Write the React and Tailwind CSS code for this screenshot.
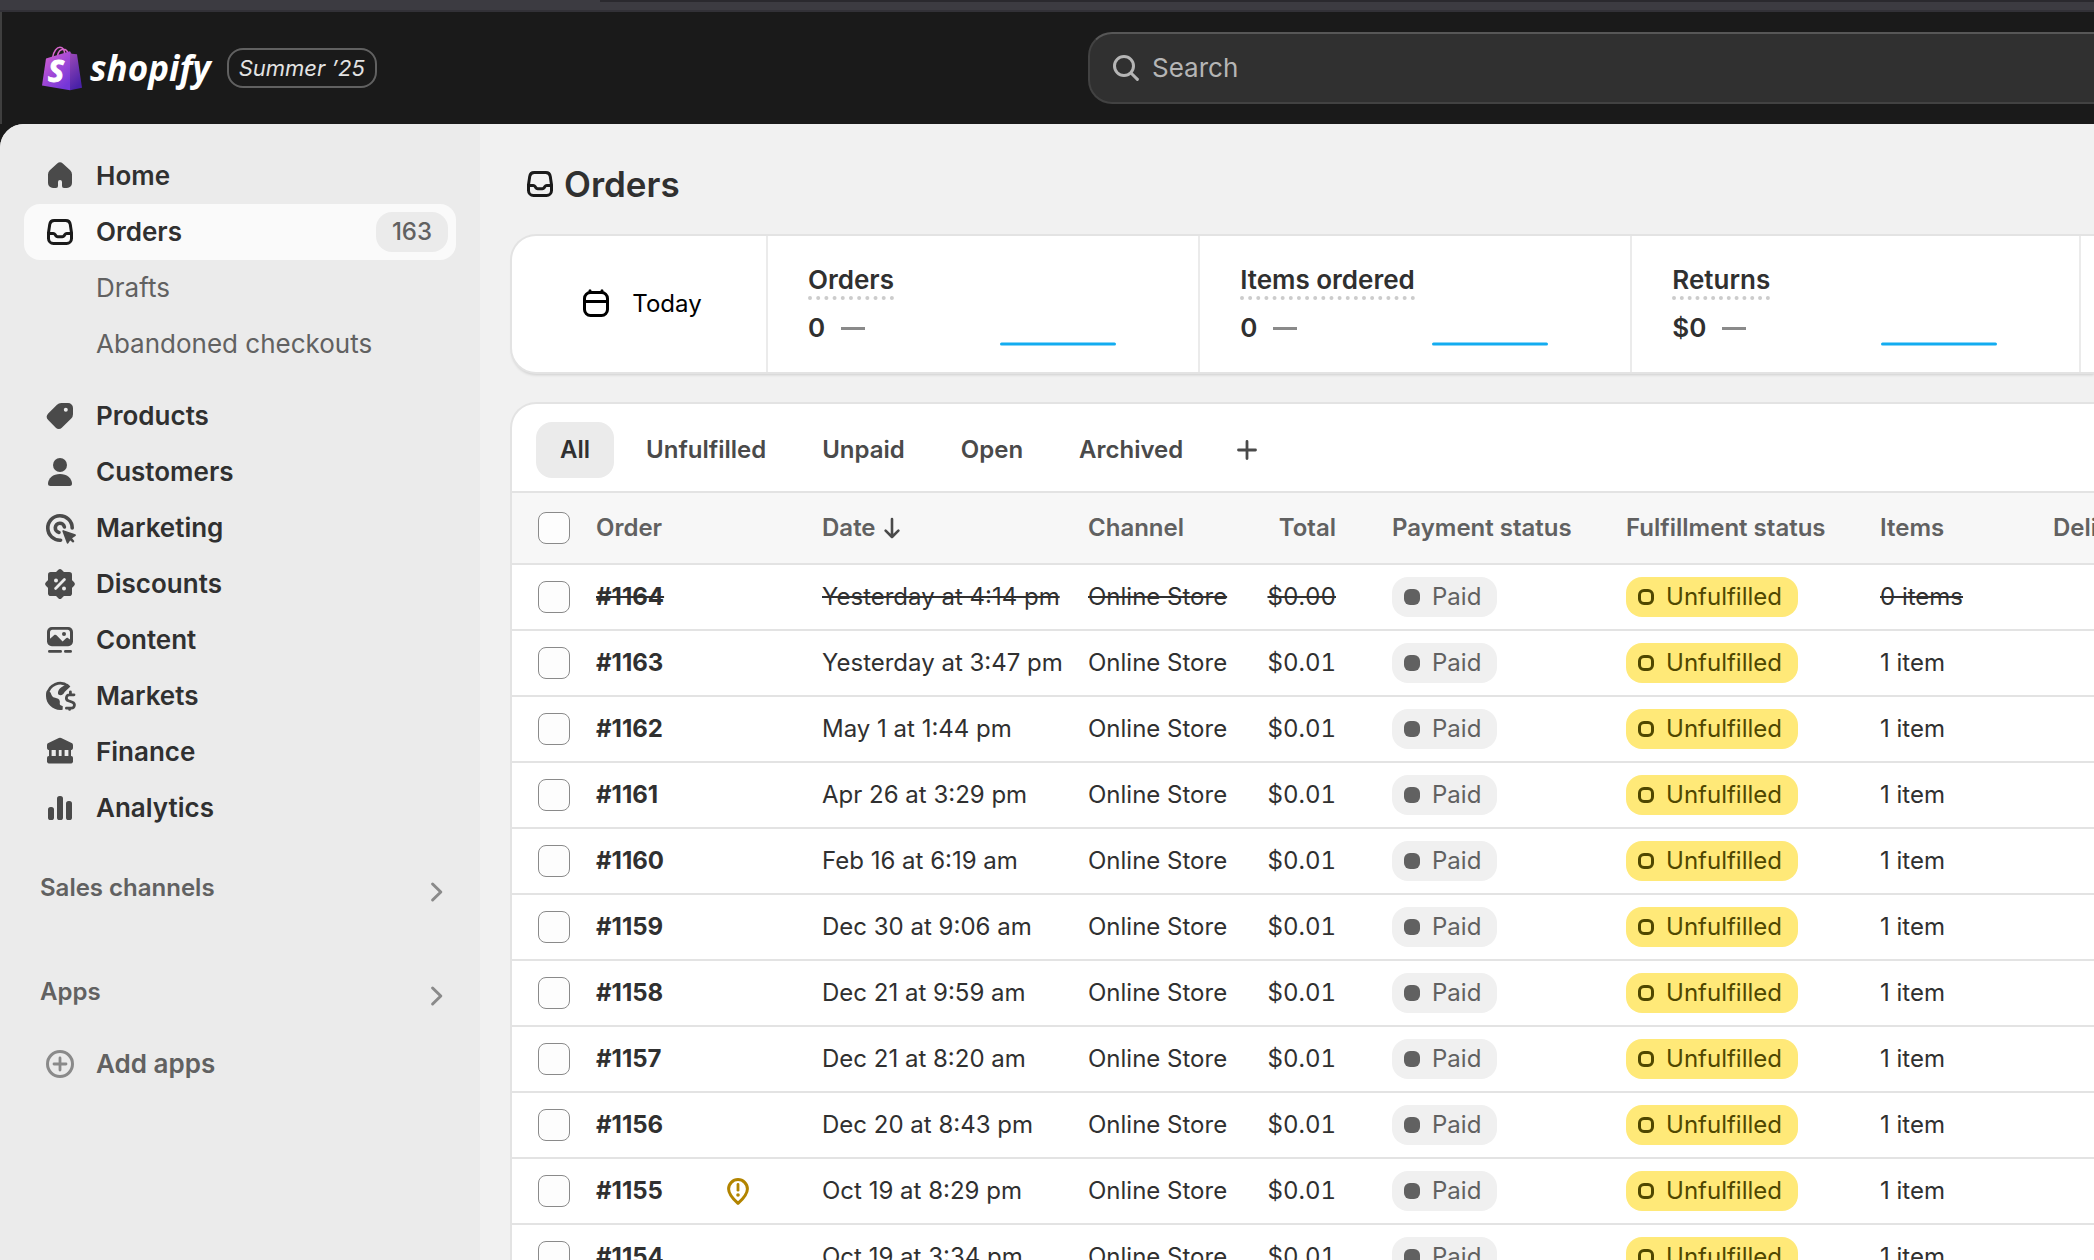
import clsx from "clsx";

const ICONS = {
  home: (
    <path
      fill="currentColor"
      d="M8.6 3.8 4.9 7.1a2.8 2.8 0 0 0-.9 2.1v4.3A2.5 2.5 0 0 0 6.5 16H8a1 1 0 0 0 1-1v-2a1 1 0 0 1 2 0v2a1 1 0 0 0 1 1h1.5a2.5 2.5 0 0 0 2.5-2.5V9.2a2.8 2.8 0 0 0-.9-2.1l-3.7-3.3a2.1 2.1 0 0 0-2.8 0Z"
    />
  ),
  orders: (
    <g fill="none" stroke="currentColor" strokeWidth="1.5" strokeLinejoin="round">
      <path d="M4.25 10.4v2.85a2.5 2.5 0 0 0 2.5 2.5h6.5a2.5 2.5 0 0 0 2.5-2.5V10.4l-.62-4.2a2.25 2.25 0 0 0-2.22-1.95H7.09A2.25 2.25 0 0 0 4.87 6.2Z" />
      <path d="M4.25 10.75h2.4c.4 0 .7.2.9.5l.35.6c.2.3.5.5.9.5h2.4c.4 0 .7-.2.9-.5l.35-.6c.2-.3.5-.5.9-.5h2.4" />
    </g>
  ),
  products: (
    <path
      fill="currentColor"
      fillRule="evenodd"
      d="M10.6 3.5H14A2.5 2.5 0 0 1 16.5 6v3.1a3 3 0 0 1-.88 2.12L10.9 15.9a2.1 2.1 0 0 1-3 0L4.1 12a2.4 2.4 0 0 1 0-3.3l4.4-4.3a3 3 0 0 1 2.1-.9ZM12.9 7.9a1 1 0 1 0 0-2 1 1 0 0 0 0 2Z"
    />
  ),
  customers: (
    <g fill="currentColor">
      <circle cx="10" cy="6.5" r="3.5" />
      <path d="M4 15.9C4 13.1 6.6 11 10 11s6 2.1 6 4.9c0 .7-.5 1.1-1.2 1.1H5.2C4.5 17 4 16.6 4 15.9Z" />
    </g>
  ),
  marketing: (
    <g fill="none" stroke="currentColor" strokeWidth="1.8" strokeLinecap="round">
      <path d="M10.3 16.1A6.1 6.1 0 1 1 16.1 10" />
      <path d="M9.5 12.2A2.3 2.3 0 1 1 12.2 9.5" />
      <path
        d="m11.6 11.5 5.9 2.1-2.1 1.4 1.3 1.6-.2.2-1.5-1.3-1.2 1.9Z"
        fill="currentColor"
        strokeWidth="0.9"
        strokeLinejoin="round"
      />
    </g>
  ),
  discounts: (
    <g>
      <rect x="4" y="4" width="12" height="12" rx="1.4" fill="currentColor" />
      <rect
        x="4.4"
        y="4.4"
        width="11.2"
        height="11.2"
        rx="1.2"
        fill="currentColor"
        transform="rotate(45 10 10)"
      />
      <path d="m7.8 12.2 4.4-4.4" stroke="#ebebeb" strokeWidth="1.4" strokeLinecap="round" />
      <circle cx="8" cy="8.2" r="1" fill="#ebebeb" />
      <circle cx="12" cy="12.2" r="1" fill="#ebebeb" />
    </g>
  ),
  content: (
    <g>
      <rect x="3.5" y="3.5" width="13" height="9.6" rx="2.4" fill="currentColor" />
      <path
        d="M6.2 4.9h7.6c.7 0 1.2.5 1.2 1.2v3.6l-.9-.6c-.4-.3-.9-.2-1.2.1l-1.6 1.5-2.9-3c-.4-.4-1-.4-1.4-.1L5 9.4V6.1c0-.7.5-1.2 1.2-1.2Z"
        fill="#ebebeb"
      />
      <circle cx="12" cy="7" r="1" fill="currentColor" />
      <path
        d="M4.7 15.7h5.6M12.7 15.7h2.6"
        stroke="currentColor"
        strokeWidth="1.4"
        strokeLinecap="round"
      />
    </g>
  ),
  markets: (
    <g fill="none" stroke="currentColor" strokeWidth="1.4" strokeLinecap="round">
      <path d="M3.8 9.2A6.3 6.3 0 0 1 14 5" />
      <path
        stroke="none"
        fill="currentColor"
        d="M3 10c0-1 .2-1.9.5-2.6L5.3 8.2c.4 1.3.8 2.4 2.3 2.7 1 .2 2.2.7 2.3 1.7.1.7-.2 1.3.2 1.9l1.3.6-.1 1.8C6.9 17.6 3 14.2 3 10Z"
      />
      <path
        stroke="none"
        fill="currentColor"
        d="M13.6 3.9 10.7 5.6C9.4 6.5 8.6 8.1 9.2 9.3c1.3.7 2.6 0 3.1-1.3l2.9-2.7Z"
      />
      <path d="M17 9.4h-2.3a1.55 1.55 0 0 0-.5 3l2 .7a1.55 1.55 0 0 1-.5 3H13.2M15.2 9.2V7.9M14.8 16.2v.5" />
    </g>
  ),
  finance: (
    <g fill="currentColor">
      <path d="M9.4 3a1.3 1.3 0 0 1 1.2 0l5.2 2.5c.4.2.7.6.7 1.1V7.7A1.3 1.3 0 0 1 15.2 9H4.8a1.3 1.3 0 0 1-1.3-1.3V6.6c0-.5.3-.9.7-1.1Z" />
      <path d="M4.5 8.5h1.3v4H4.5zM7.9 8.5h1.5v4H7.9zM10.8 8.5h1.5v4h-1.5zM14.2 8.5h1.3v4h-1.3z" />
      <rect x="3.5" y="12" width="13" height="3.7" rx="0.9" />
    </g>
  ),
  analytics: (
    <g fill="currentColor">
      <rect x="4" y="9.5" width="3" height="6.5" rx="1.3" />
      <rect x="8.5" y="4" width="3" height="12" rx="1.3" />
      <rect x="13" y="6.5" width="3" height="9.5" rx="1.3" />
    </g>
  ),
  plusCircle: (
    <g fill="none" stroke="currentColor" strokeWidth="1.5" strokeLinecap="round">
      <circle cx="10" cy="10" r="6.25" />
      <path d="M10 7v6M7 10h6" strokeWidth="1.4" />
    </g>
  ),
  chevron: (
    <path
      d="m8.3 6 4.1 4-4.1 4"
      fill="none"
      stroke="currentColor"
      strokeWidth="1.5"
      strokeLinecap="round"
      strokeLinejoin="round"
    />
  ),
  calendar: (
    <g fill="none" stroke="currentColor" strokeWidth="1.5" strokeLinecap="round">
      <rect x="4.25" y="4.25" width="11.5" height="11.5" rx="3" />
      <path d="M4.5 8.75h11M7 3.4v.8M13 3.4v.8" />
    </g>
  ),
  plus: (
    <path
      d="M10 5.75v8.5M5.75 10h8.5"
      stroke="currentColor"
      strokeWidth="1.4"
      strokeLinecap="round"
    />
  ),
  arrowDown: (
    <path
      d="M10 5.5v9M6.8 11.3l3.2 3.2 3.2-3.2"
      fill="none"
      stroke="currentColor"
      strokeWidth="1.3"
      strokeLinecap="round"
      strokeLinejoin="round"
    />
  ),
  search: (
    <g fill="none" stroke="currentColor" strokeWidth="1.5" strokeLinecap="round">
      <circle cx="9" cy="9" r="4.75" />
      <path d="m12.5 12.5 3.2 3.2" />
    </g>
  ),
  risk: (
    <g fill="none" stroke="currentColor" strokeWidth="1.5" strokeLinecap="round">
      <path
        d="M10 16.2c-1.9-1.7-4.7-4.2-4.7-7.2a4.7 4.7 0 0 1 9.4 0c0 3-2.8 5.5-4.7 7.2Z"
        strokeLinejoin="round"
      />
      <path d="M10 6.7v2.9" strokeWidth="1.4" />
      <circle cx="10" cy="12" r="0.9" fill="currentColor" stroke="none" />
    </g>
  ),
};

function Icon({ name, className }) {
  return (
    <svg
      viewBox="0 0 20 20"
      className={clsx("h-10 w-10 shrink-0", className)}
      aria-hidden="true"
    >
      {ICONS[name]}
    </svg>
  );
}

function Logo() {
  return (
    <a href="#home" className="flex items-center gap-2 text-white">
      <svg viewBox="0 0 40 46" className="h-[46px] w-10" aria-hidden="true">
        <defs>
          <linearGradient id="bagFront" x1="0" y1="0" x2="0.7" y2="1">
            <stop offset="0" stopColor="#d966cf" />
            <stop offset="0.5" stopColor="#a84bd6" />
            <stop offset="1" stopColor="#7436d8" />
          </linearGradient>
          <linearGradient id="bagSide" x1="0" y1="0" x2="0.3" y2="1">
            <stop offset="0" stopColor="#a04bb8" />
            <stop offset="1" stopColor="#4a22a8" />
          </linearGradient>
        </defs>
        <path
          d="M10.5 13C11.5 6 15 2.2 18 2.2c3 0 4.5 3 4.7 7M15.5 11C16.3 6.5 19 4.3 21.5 4.3c2.2 0 4 2 4.7 4.5"
          fill="none"
          stroke="#d767cc"
          strokeWidth="1.5"
        />
        <path d="M4 13.6 28 6.2v39L0 40.4Z" fill="url(#bagFront)" />
        <path d="m28 6.2 1.5 2.5 5.5.6 5 33.5-12 2.4Z" fill="url(#bagSide)" />
        <text
          x="6"
          y="37"
          fill="#fff"
          stroke="#fff"
          strokeWidth="1"
          fontFamily="Open Sans, sans-serif"
          fontSize="30"
          fontWeight="700"
          fontStyle="italic"
        >
          S
        </text>
      </svg>
      <span className="font-['Open_Sans',sans-serif] text-[35px] leading-10 font-bold italic">
        shopify
      </span>
    </a>
  );
}

function TopBar() {
  return (
    <header className="flex h-28 shrink-0 items-center border-l-2 border-[#3f3f3f] bg-[#1a1a1a]">
      <div className="flex w-[1086px] shrink-0 items-center gap-4 pl-10">
        <Logo />
        <span className="rounded-2xl border-2 border-[#616161] px-2.5 text-[22px] leading-9 text-[#e3e3e3] italic">
          Summer ’25
        </span>
      </div>
      <label className="-mr-8 flex h-[72px] flex-1 items-center gap-1.5 rounded-l-3xl border-2 border-[#424242] border-t-[#575757] bg-[#303030] pl-4 text-[#b5b5b5]">
        <Icon name="search" />
        <input
          type="search"
          placeholder="Search"
          aria-label="Search"
          className="min-w-0 flex-1 bg-transparent text-[26px] leading-9 outline-none placeholder:text-[#b5b5b5]"
        />
      </label>
    </header>
  );
}

function NavItem({ icon, label, badge, active, sub, muted }) {
  return (
    <a
      href="#nav"
      aria-current={active ? "page" : undefined}
      className={clsx(
        "flex h-14 items-center gap-4 rounded-2xl pr-2 pl-4 text-[26px] leading-10",
        active && "bg-[#fafafa] font-semibold text-[#303030]",
        sub && "font-[420] text-[#616161]",
        muted && "font-[560] text-[#616161]",
        !active && !sub && !muted && "font-[560] text-[#303030]"
      )}
    >
      {icon ? (
        <Icon
          name={icon}
          className={clsx(
            active && "text-[#1a1a1a]",
            muted && "text-[#8a8a8a]",
            !active && !muted && "text-[#4a4a4a]"
          )}
        />
      ) : (
        <span className="w-10" />
      )}
      <span className="flex-1">{label}</span>
      {badge && (
        <span className="rounded-2xl bg-[#ebebeb] px-4 text-[24px] leading-10 font-[550] text-[#616161]">
          {badge}
        </span>
      )}
    </a>
  );
}

function SectionButton({ label }) {
  return (
    <button
      type="button"
      className="flex h-14 w-full items-center justify-between pl-4 text-[24px] leading-10 font-semibold text-[#616161]"
    >
      <span className="pb-2">{label}</span>
      <Icon name="chevron" className="text-[#8a8a8a]" />
    </button>
  );
}

function Sidebar() {
  return (
    <nav className="w-[480px] shrink-0 bg-[#ebebeb] px-6 pt-6">
      <NavItem icon="home" label="Home" />
      <NavItem icon="orders" label="Orders" badge="163" active />
      <NavItem label="Drafts" sub />
      <NavItem label="Abandoned checkouts" sub />
      <div className="mt-4">
        <NavItem icon="products" label="Products" />
        <NavItem icon="customers" label="Customers" />
        <NavItem icon="marketing" label="Marketing" />
        <NavItem icon="discounts" label="Discounts" />
        <NavItem icon="content" label="Content" />
        <NavItem icon="markets" label="Markets" />
        <NavItem icon="finance" label="Finance" />
        <NavItem icon="analytics" label="Analytics" />
      </div>
      <div className="mt-7">
        <SectionButton label="Sales channels" />
      </div>
      <div className="mt-12">
        <SectionButton label="Apps" />
      </div>
      <div className="mt-3">
        <NavItem icon="plusCircle" label="Add apps" muted />
      </div>
    </nav>
  );
}

function Metric({ label, value }) {
  return (
    <div className="shrink-0 border-l-2 border-[#ebebeb] pt-7 pr-[82px] pb-6 pl-10 text-[26px] font-semibold text-[#303030]">
      <div className="mb-2 w-fit border-b-4 border-dotted border-[#cccccc] leading-8">
        {label}
      </div>
      <div className="flex items-center leading-10">
        {value}
        <span className="ml-4 h-[3px] w-6 bg-[#8a8a8a]" />
        <svg viewBox="0 0 116 40" className="ml-[135px] h-10 w-[116px]" aria-hidden="true">
          <path d="M1.5 36h113" stroke="#13acf0" strokeWidth="3" strokeLinecap="round" />
        </svg>
      </div>
    </div>
  );
}

function Metrics() {
  return (
    <section className="-mr-8 flex rounded-l-3xl bg-white shadow-[0_3px_3px_#00000026] ring-2 ring-[#e3e3e3]">
      <button
        type="button"
        className="flex w-[254px] shrink-0 items-center justify-center gap-4 text-[24px] text-black"
      >
        <Icon name="calendar" />
        Today
      </button>
      <Metric label="Orders" value="0" />
      <Metric label="Items ordered" value="0" />
      <Metric label="Returns" value="$0" />
      <div className="flex-1 border-l-2 border-[#ebebeb]" />
    </section>
  );
}

const TABS = ["All", "Unfulfilled", "Unpaid", "Open", "Archived"];

const ORDERS = [
  { id: "#1164", date: "Yesterday at 4:14 pm", total: "$0.00", items: "0 items", cancelled: true },
  { id: "#1163", date: "Yesterday at 3:47 pm" },
  { id: "#1162", date: "May 1 at 1:44 pm" },
  { id: "#1161", date: "Apr 26 at 3:29 pm" },
  { id: "#1160", date: "Feb 16 at 6:19 am" },
  { id: "#1159", date: "Dec 30 at 9:06 am" },
  { id: "#1158", date: "Dec 21 at 9:59 am" },
  { id: "#1157", date: "Dec 21 at 8:20 am" },
  { id: "#1156", date: "Dec 20 at 8:43 pm" },
  { id: "#1155", date: "Oct 19 at 8:29 pm", risk: true },
  { id: "#1154", date: "Oct 19 at 3:34 pm" },
];

function Checkbox({ label }) {
  return (
    <input
      type="checkbox"
      aria-label={label}
      className="block h-8 w-8 appearance-none rounded-lg border border-[#8a8a8a] bg-[#fdfdfd]"
    />
  );
}

function OrderRow({ id, date, total = "$0.01", items = "1 item", cancelled, risk }) {
  const text = cancelled && "line-through";
  return (
    <tr className="h-[66px] border-b-2 border-[#e3e3e3]">
      <td className="pl-[26px]">
        <Checkbox label={`Select order ${id}`} />
      </td>
      <td className={clsx("pl-3 font-[650]", text)}>{id}</td>
      <td className="pl-3">{risk && <Icon name="risk" className="text-[#b28400]" />}</td>
      <td className={clsx("pl-3", text)}>{date}</td>
      <td className={clsx("pl-3", text)}>Online Store</td>
      <td className={clsx("pr-3 text-right tabular-nums", text)}>{total}</td>
      <td className="pl-11">
        <span className="inline-flex items-center gap-3 rounded-2xl bg-[#f0f0f0] pr-4 pl-3 align-middle leading-10 text-[#616161]">
          <span className="h-4 w-4 rounded-md bg-[#616161]" />
          Paid
        </span>
      </td>
      <td className="pl-3">
        <span className="inline-flex items-center gap-3 rounded-2xl bg-[#ffe978] pr-4 pl-3 align-middle leading-10 text-[#4f4700]">
          <span className="h-4 w-4 rounded-md border-3 border-[#4f4700]" />
          Unfulfilled
        </span>
      </td>
      <td className={clsx("pl-3", text)}>{items}</td>
      <td />
    </tr>
  );
}

function OrdersTable() {
  return (
    <section className="mt-8 -mr-8 overflow-hidden rounded-tl-3xl bg-white ring-2 ring-[#e3e3e3]">
      <div className="flex items-center gap-2 px-6 pt-[18px] pb-[13px] text-[24px] leading-10">
        {TABS.map((tab) => (
          <button
            key={tab}
            type="button"
            className={clsx(
              "h-14 rounded-2xl px-6 font-[580]",
              tab === "All" ? "bg-[#ebebeb] text-[#303030]" : "text-[#4a4a4a]"
            )}
          >
            {tab}
          </button>
        ))}
        <button type="button" aria-label="Create new view" className="px-3 text-[#4a4a4a]">
          <Icon name="plus" />
        </button>
      </div>

      <table className="w-[1830px] table-fixed border-collapse text-[24px] font-[430] whitespace-nowrap text-[#303030]">
        <colgroup>
          <col className="w-[72px]" />
          <col className="w-[122px]" />
          <col className="w-[104px]" />
          <col className="w-[266px]" />
          <col className="w-[164px]" />
          <col className="w-[108px]" />
          <col className="w-[266px]" />
          <col className="w-[254px]" />
          <col className="w-[173px]" />
          <col />
        </colgroup>
        <thead>
          <tr className="h-[72px] border-y-2 border-[#e3e3e3] bg-[#f7f7f7] text-left text-[#616161] [&>th]:font-[570]">
            <th className="pl-[26px]">
              <Checkbox label="Select all orders" />
            </th>
            <th colSpan={2} className="pl-3">
              Order
            </th>
            <th className="pl-3">
              <button type="button" className="flex items-center">
                Date
                <Icon name="arrowDown" className="-ml-1 text-[#4a4a4a]" />
              </button>
            </th>
            <th className="pl-3">Channel</th>
            <th className="pr-3 text-right">Total</th>
            <th className="pl-11">Payment status</th>
            <th className="pl-3">Fulfillment status</th>
            <th className="pl-3">Items</th>
            <th className="pl-3">Delivery status</th>
          </tr>
        </thead>
        <tbody>
          {ORDERS.map((order) => (
            <OrderRow key={order.id} {...order} />
          ))}
        </tbody>
      </table>
    </section>
  );
}

export default function App() {
  return (
    <div className="flex h-screen flex-col overflow-hidden bg-[#1a1a1a] font-['Inter',sans-serif]">
      {/* Window edge above the admin */}
      <div className="flex h-3 shrink-0 border-b-2 border-[#323137] bg-[#3c3b41]">
        <div className="w-[600px]" />
        <div className="h-0.5 flex-1 bg-[#2a292e]" />
      </div>
      <TopBar />
      <div className="flex min-h-0 flex-1 overflow-hidden rounded-tl-3xl bg-[#f1f1f1]">
        <Sidebar />
        <main className="min-w-0 flex-1 overflow-hidden px-8 pt-10">
          <h1 className="mb-8 flex items-center gap-1 pl-2 text-[35px] leading-10 font-semibold text-[#303030]">
            <Icon name="orders" className="text-[#1a1a1a]" />
            Orders
          </h1>
          <Metrics />
          <OrdersTable />
        </main>
      </div>
    </div>
  );
}
